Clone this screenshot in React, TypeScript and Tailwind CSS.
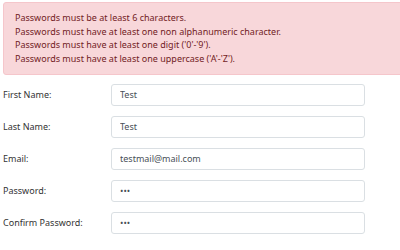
import React from "react";

const errors = [
  "Passwords must be at least 6 characters.",
  "Passwords must have at least one non alphanumeric character.",
  "Passwords must have at least one digit ('0'-'9').",
  "Passwords must have at least one uppercase ('A'-'Z').",
];

const fields = [
  { label: "First Name:", value: "Test", type: "text" },
  { label: "Last Name:", value: "Test", type: "text" },
  { label: "Email:", value: "testmail@mail.com", type: "text" },
  { label: "Password:", value: "abc", type: "password" },
  { label: "Confirm Password:", value: "abc", type: "password" },
];

export default function App() {
  return (
    <div
      className="w-[400px] h-[250px] overflow-hidden bg-white text-[#212529]"
      style={{ fontFamily: '"Noto Sans", "Open Sans", sans-serif' }}
    >
      <div className="ml-[3px] mt-[2px] w-[410px] rounded-[3px] border border-[#f5c6cb] bg-[#f8d7da] text-[#721c24] pl-[11px] pt-[8px] pb-[8px] text-[9px] leading-[13.7px]">
        {errors.map((e) => (
          <div key={e}>{e}</div>
        ))}
      </div>
      <div className="mt-[9px] flex flex-col gap-[10px] pl-[3px]">
        {fields.map((f) => (
          <div key={f.label} className="flex items-center">
            <label className="w-[108px] text-[9px] text-[#333]">{f.label}</label>
            <input
              readOnly
              type={f.type}
              value={f.value}
              className="w-[254px] h-[22px] rounded-[3px] border border-[#dadfe3] px-[8px] text-[9px] text-[#495057] outline-none"
            />
          </div>
        ))}
      </div>
    </div>
  );
}
